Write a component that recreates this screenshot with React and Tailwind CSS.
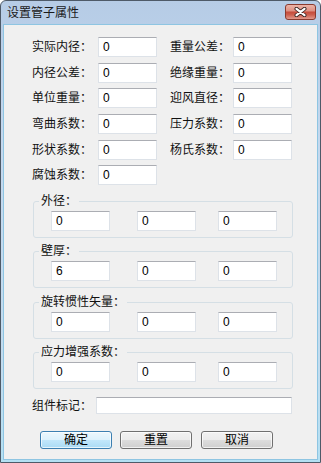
import React from 'react';

// Win7 basic-style "设置管子属性" dialog

const Field = ({ value = '0', className = '' }) => (
  <input
    defaultValue={value}
    className={`h-[20px] w-[59px] border border-[#dde2e8] border-t-[#abadb3] bg-white pl-[4px] pb-[1px] text-[12px] text-black outline-none ${className}`}
  />
);

const Row = ({ label, labelWidth, className = '' }) => (
  <div className={`flex items-center ${className}`}>
    <span className={`${labelWidth} text-[12px] leading-[14px] text-[#111]`}>{label}</span>
    <Field />
  </div>
);

const Group = ({ title, values, className = '' }) => (
  <div className={`ml-[29px] h-[37px] w-[260px] rounded-[3px] border border-[#d5dfe5] ${className}`}>
    <div className="-mt-[8px] ml-[5px] w-fit bg-[#f0f0f0] px-[2px] text-[12px] leading-[14px] text-[#111]">
      {title}
    </div>
    <div className="mt-[3px] flex pl-[17px]">
      <Field value={values[0]} />
      <Field value={values[1]} className="ml-[27px]" />
      <Field value={values[2]} className="ml-[22px]" />
    </div>
  </div>
);

const Button = ({ children, primary = false, className = '' }) => (
  <button
    className={`h-[18px] w-[72px] rounded-[3px] border text-[12px] leading-[14px] text-black shadow-[inset_0_0_0_1px_rgba(255,255,255,0.7)] ${
      primary
        ? 'border-[#3c7fb1] bg-[linear-gradient(to_bottom,#ecf7fd_0%,#dcf1fc_50%,#c2e7fb_50%,#aadbf5_100%)]'
        : 'border-[#707070] bg-[linear-gradient(to_bottom,#f2f2f2_0%,#ebebeb_50%,#dddddd_50%,#cfcfcf_100%)]'
    } ${className}`}
  >
    {children}
  </button>
);

const leftRows = ['实际内径：', '内径公差：', '单位重量：', '弯曲系数：', '形状系数：', '腐蚀系数：'];
const rightRows = ['重量公差：', '绝缘重量：', '迎风直径：', '压力系数：', '杨氏系数：'];
const rowGaps = ['', 'mt-[6px]', 'mt-[5px]', 'mt-[6px]', 'mt-[6px]', 'mt-[5px]'];

export default function App() {
  return (
    <div className="flex h-[463px] w-[321px] flex-col overflow-hidden rounded-t-[6px] border border-[#4e5a68] bg-[linear-gradient(to_bottom,#b6cce6_0%,#c4d8ee_30%,#c2dcef_80%,#b4e0f3_100%)] px-[2px] pb-[2px] font-['Liberation_Sans','Noto_Sans_CJK_SC',sans-serif]">
      {/* title bar */}
      <div className="flex h-[23px] items-start justify-between pl-[4px] pr-[2px]">
        <span className="pt-[5px] text-[12px] leading-[14px] text-[#1a1a1a]">设置管子属性</span>
        <div className="mt-[3px] flex h-[16px] w-[31px] items-center justify-center rounded-[3px] border border-[#8a3a2e] bg-[linear-gradient(to_bottom,#ecb4a8_0%,#df9284_40%,#c64e3d_52%,#cc5f4e_70%,#e19a8d_100%)]">
          <svg width="13" height="10" viewBox="0 0 13 10">
            <path d="M2.5 1.8 L10.5 8.2 M10.5 1.8 L2.5 8.2" stroke="#3a2623" strokeWidth="4" strokeLinecap="round" />
            <path d="M2.5 1.8 L10.5 8.2 M10.5 1.8 L2.5 8.2" stroke="#ffffff" strokeWidth="2.2" strokeLinecap="round" />
          </svg>
        </div>
      </div>

      {/* client area */}
      <div className="flex-1 border border-[#8ec5e2] bg-[#f0f0f0]">
        <div className="flex pt-[12px]">
          <div className="ml-[28px] flex flex-col">
            {leftRows.map((label, i) => (
              <Row key={label} label={label} labelWidth="w-[66px]" className={rowGaps[i]} />
            ))}
          </div>
          <div className="ml-[13px] flex flex-col">
            {rightRows.map((label, i) => (
              <Row key={label} label={label} labelWidth="w-[63px]" className={rowGaps[i]} />
            ))}
          </div>
        </div>

        <Group title="外径：" values={['0', '0', '0']} className="mt-[16px]" />
        <Group title="壁厚：" values={['6', '0', '0']} className="mt-[13px]" />
        <Group title="旋转惯性矢量：" values={['0', '0', '0']} className="mt-[14px]" />
        <Group title="应力增强系数：" values={['0', '0', '0']} className="mt-[13px]" />

        <div className="ml-[28px] mt-[8px] flex items-center">
          <span className="w-[64px] text-[12px] leading-[14px] text-[#111]">组件标记：</span>
          <input className="h-[17px] w-[196px] border border-[#dde2e8] border-t-[#abadb3] bg-white pl-[4px] text-[12px] outline-none" />
        </div>

        <div className="ml-[36px] mt-[17px] flex">
          <Button primary>确定</Button>
          <Button className="ml-[8px]">重置</Button>
          <Button className="ml-[9px]">取消</Button>
        </div>
      </div>
    </div>
  );
}
